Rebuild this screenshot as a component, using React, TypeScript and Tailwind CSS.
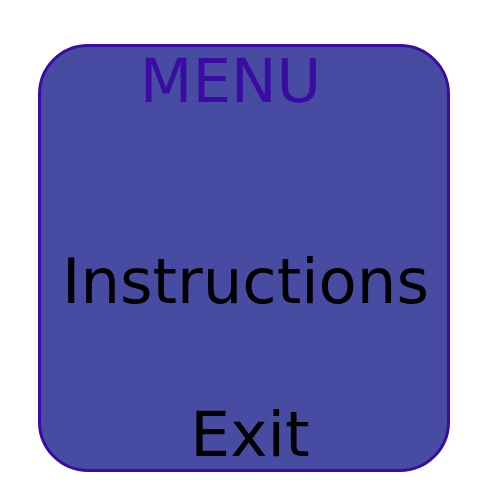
import React from 'react';

const App: React.FC = () => {
  return (
    <div className="w-[500px] h-[500px] bg-white pt-[44px] pl-[38px]" style={{ fontFamily: '"DejaVu Sans", sans-serif' }}>
      <div className="w-[412px] h-[428px] rounded-[50px] border-[3px] border-[#3a0ca3] bg-[#474ca2] flex flex-col items-center">
        <h1 className="-mt-[3px] pr-[27px] text-[61px] leading-[74px] text-[#3a0ca3]">MENU</h1>
        <button className="mt-[127px] pl-[3px] text-[62.5px] leading-[74px] text-black">Instructions</button>
        <button className="mt-[79px] pl-[12px] text-[63px] leading-[74px] text-black">Exit</button>
      </div>
    </div>
  );
};

export default App;
